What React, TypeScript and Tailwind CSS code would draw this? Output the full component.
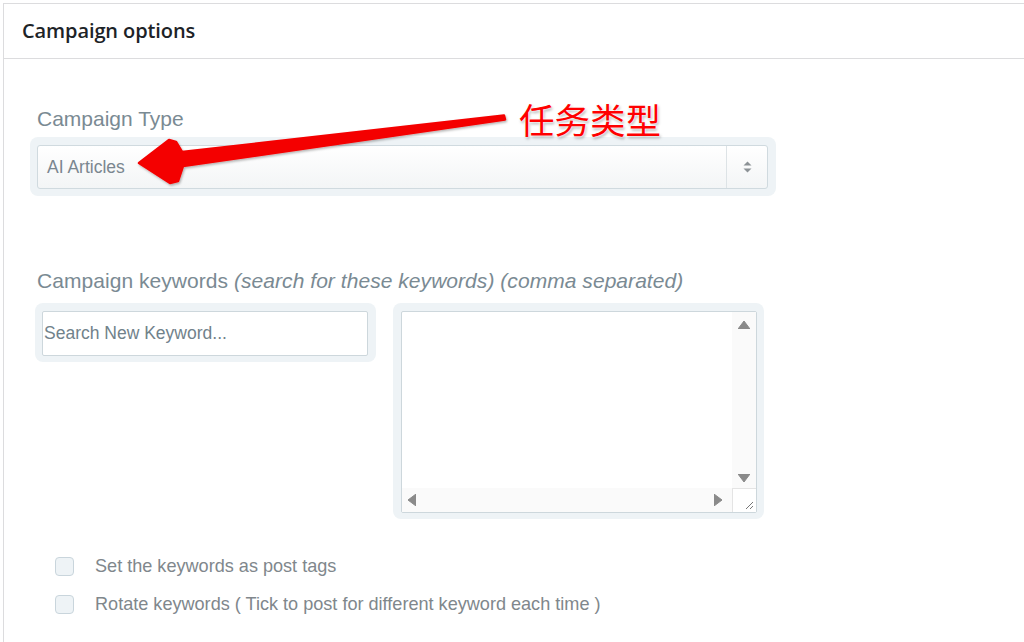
import { useState } from "react";

const labelCls = "pl-[7px] text-[21px] leading-6 text-[#7a8a93]";

const Tri = ({ dir }: { dir: "up" | "down" | "left" | "right" }) => {
  const pts = {
    up: "0,8 6,0 12,8",
    down: "0,0 12,0 6,8",
    left: "8,0 8,12 0,6",
    right: "0,0 0,12 8,6",
  }[dir];
  const w = dir === "up" || dir === "down" ? 12 : 8;
  const h = dir === "up" || dir === "down" ? 8 : 12;
  return (
    <svg width={w} height={h} viewBox={`0 0 ${w} ${h}`}>
      <polygon points={pts} fill="#8a8a8a" strokeLinejoin="round" stroke="#8a8a8a" strokeWidth="1" />
    </svg>
  );
};

const Check = ({ label, checked, onToggle }: { label: string; checked: boolean; onToggle: () => void }) => (
  <label className="flex items-center gap-[21px] cursor-pointer" onClick={onToggle}>
    <span className="size-[19px] rounded-[4px] border border-[#c9d5dc] bg-[#eef3f6] flex items-center justify-center text-[12px] text-[#2271b1]">
      {checked ? "✓" : ""}
    </span>
    <span className="text-[18.1px] leading-6 text-[#80878c]">{label}</span>
  </label>
);

export default function App() {
  const [tags, setTags] = useState(false);
  const [rotate, setRotate] = useState(false);

  return (
    <div className="relative h-[642px] overflow-hidden bg-white pl-[3px] pt-[3px] font-['Liberation_Sans',Arial,sans-serif]">
      <div className="h-[640px] border-l border-t border-b border-[#dcdcde]">
        {/* header */}
        <div className="h-[55px] border-b border-[#dcdcde] flex items-center pl-[18px]">
          <h2 className="font-['Open_Sans',sans-serif] font-semibold text-[20px] text-[#1d2327] tracking-[-0.1px]">
            Campaign options
          </h2>
        </div>

        {/* body */}
        <div className="pl-[26px] pt-[48px]">
          <div className={labelCls}>Campaign Type</div>
          <div className="mt-[6px] w-[746px] rounded-[8px] bg-[#eef3f6] pl-[7px] pr-[8px] pt-[8px] pb-[7px]">
            <div className="h-[44px] flex rounded-[3px] border border-[#d0dadf] bg-gradient-to-b from-white to-[#f3f5f6]">
              <div className="flex-1 flex items-center pl-[9px] text-[17.5px] text-[#7b8790]">AI Articles</div>
              <div className="w-[41px] border-l border-[#dde3e6] flex flex-col items-center justify-center gap-[2px]">
                <svg width="9" height="12" viewBox="0 0 9 12">
                  <polygon points="0.5,4.5 4.5,0.5 8.5,4.5" fill="#8c9296" />
                  <polygon points="0.5,7.5 8.5,7.5 4.5,11.5" fill="#8c9296" />
                </svg>
              </div>
            </div>
          </div>

          <div className={`${labelCls} mt-[73px] tracking-[0.05px]`}>
            Campaign keywords <i>(search for these keywords) (comma separated)</i>
          </div>

          <div className="mt-[10px] flex items-start gap-[17px] pl-[5px]">
            <div className="w-[341px] rounded-[8px] bg-[#eef3f6] pl-[7px] pr-[8px] pt-[8px] pb-[6px]">
              <input
                placeholder="Search New Keyword..."
                className="w-full h-[45px] rounded-[2px] border border-[#cdd7dc] bg-white pl-[1px] text-[17.5px] text-[#555] placeholder:text-[#71828b] outline-none"
              />
            </div>
            <div className="w-[371px] rounded-[8px] bg-[#eef3f6] pl-[8px] pr-[7px] pt-[8px] pb-[6px]">
              <div className="h-[202px] flex flex-col rounded-[2px] border border-[#cdd7dc] bg-white">
                <div className="flex flex-1">
                  <textarea className="flex-1 resize-none outline-none overflow-hidden" />
                  <div className="w-[24px] bg-[#fafafa] flex flex-col items-center justify-between pt-[9px] pb-[6px]">
                    <Tri dir="up" />
                    <Tri dir="down" />
                  </div>
                </div>
                <div className="h-[24px] flex">
                  <div className="flex-1 bg-[#fafafa] flex items-center justify-between pl-[6px] pr-[10px]">
                    <Tri dir="left" />
                    <Tri dir="right" />
                  </div>
                  <div className="w-[24px] border-l border-t border-[#e4e4e4] bg-white flex items-end justify-end pr-[2px] pb-[2px]">
                    <svg width="10" height="10" viewBox="0 0 10 10">
                      <line x1="9" y1="2" x2="2" y2="9" stroke="#777" strokeWidth="1" />
                      <line x1="9" y1="6" x2="6" y2="9" stroke="#777" strokeWidth="1" />
                    </svg>
                  </div>
                </div>
              </div>
            </div>
          </div>

          <div className="mt-[35px] pl-[25px] flex flex-col gap-[14px]">
            <Check label="Set the keywords as post tags" checked={tags} onToggle={() => setTags(!tags)} />
            <Check
              label="Rotate keywords ( Tick to post for different keyword each time )"
              checked={rotate}
              onToggle={() => setRotate(!rotate)}
            />
          </div>
        </div>
      </div>

      {/* annotation: red arrow + note */}
      <svg className="absolute left-0 top-0 pointer-events-none" width="1024" height="642">
        <defs>
          <filter id="sh" x="-10%" y="-50%" width="120%" height="200%">
            <feDropShadow dx="1" dy="1.5" stdDeviation="1.2" floodColor="#000" floodOpacity="0.3" />
          </filter>
        </defs>
        <polygon
          filter="url(#sh)"
          points="504,115.5 182,152 176,142 169,140 139,163 170,183 178,181 183,166 505,119.5"
          fill="#f40000"
          stroke="#f40000"
          strokeWidth="2.5"
          strokeLinejoin="round"
        />
      </svg>
      <div className="absolute left-[519px] top-[98px] font-['Noto_Sans_CJK_SC',sans-serif] text-[35.5px] leading-[42px] text-[#ff0000] [text-shadow:0_0_2px_#fff,0_0_3px_#fff,1px_2px_3px_rgba(0,0,0,0.35)]">
        任务类型
      </div>
    </div>
  );
}
